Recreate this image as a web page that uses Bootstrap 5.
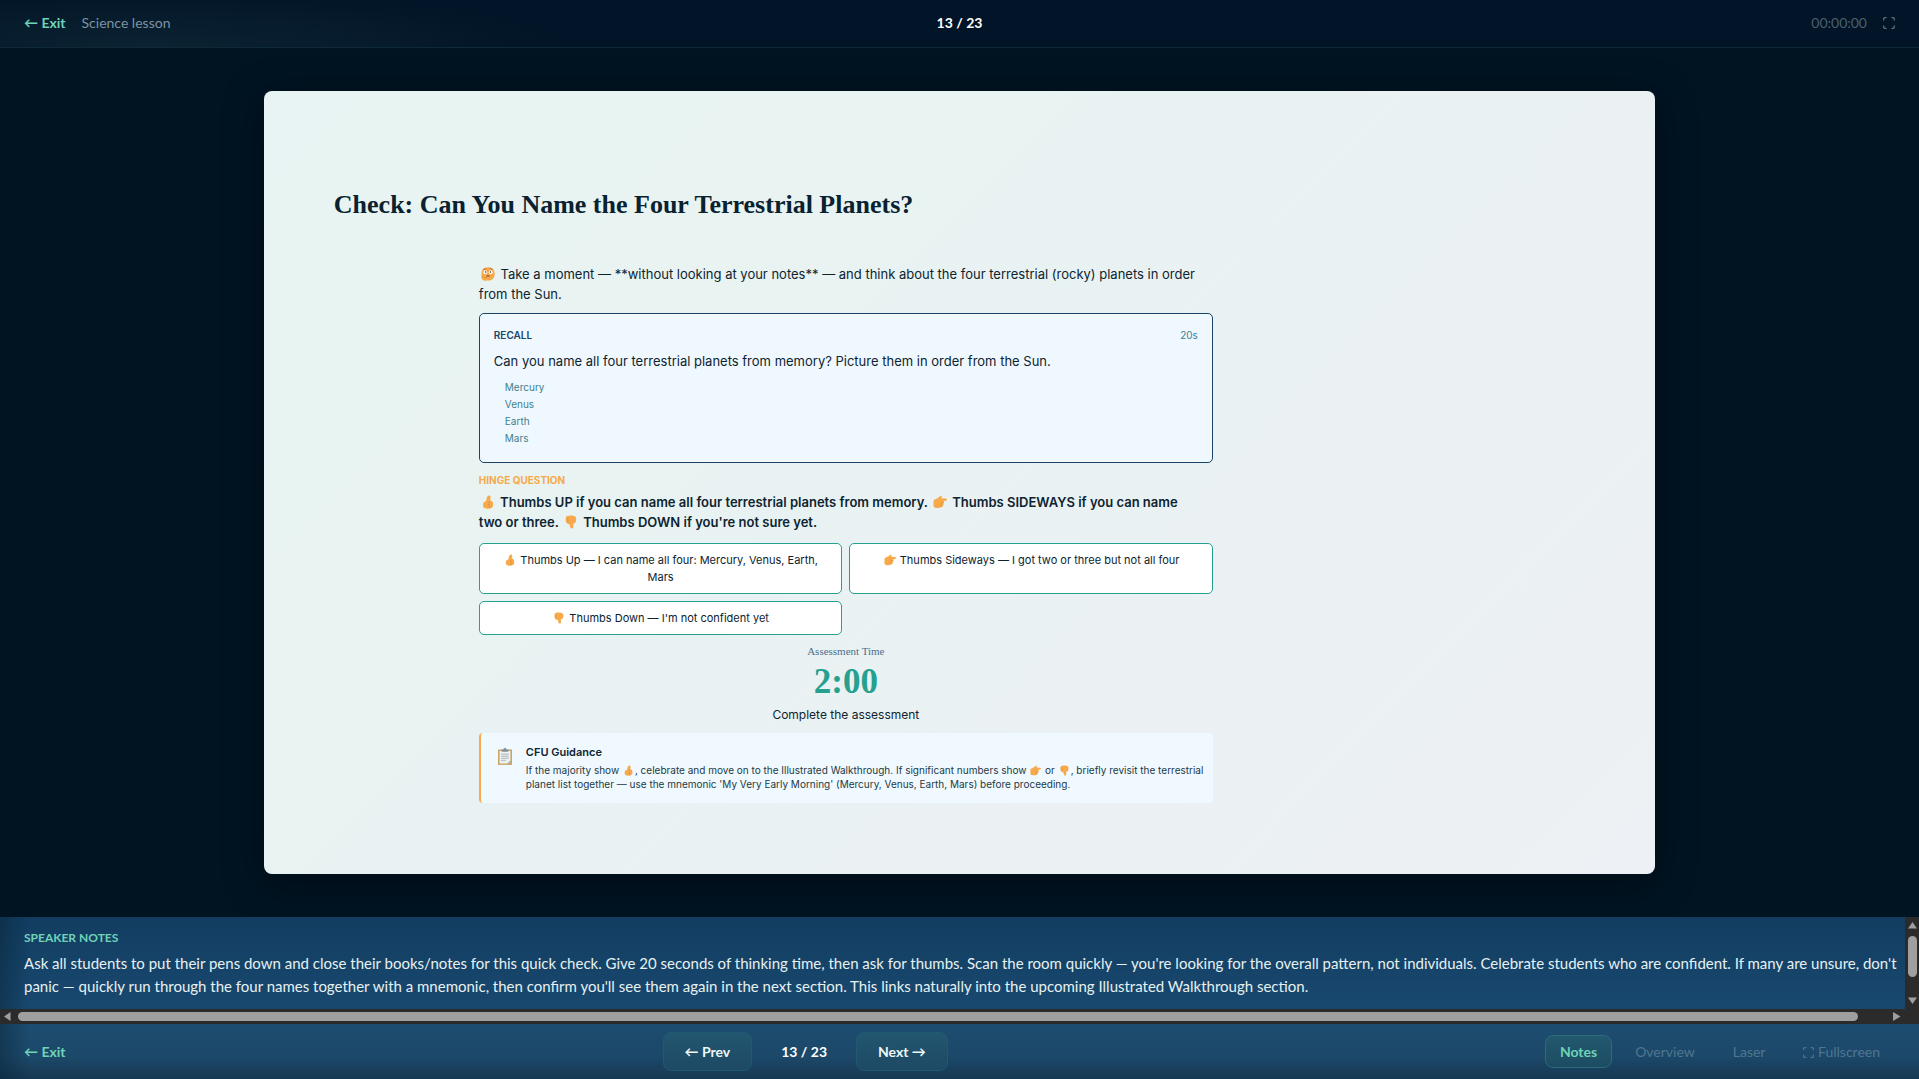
<!DOCTYPE html>
<html lang="en">
<head>
<meta charset="utf-8">
<meta name="viewport" content="width=device-width, initial-scale=1">
<title>Science lesson</title>
<link rel="stylesheet" href="https://cdn.jsdelivr.net/npm/bootstrap@5.3.0/dist/css/bootstrap.min.css">
<style>
  :root { --mint:#6fd3b8; --teal:#26a08f; --navy:#1b4466; --amber:#f7a94b; --ink:#0d2430; }
  body { background:#001422; color:#e6f1f2; font-family:Lato,Inter,sans-serif; font-size:14px; line-height:20px; }
  .topbar { padding:0 24px 2px; height:48px; border-bottom:1px solid #0e2a39;
    background:radial-gradient(ellipse 420px 60px at 150px 48px,#0b2332,rgba(11,35,50,0)) #021427; }
  .side-area { flex:1 1 0; }
  .exit-link { color:var(--mint); font-weight:700; text-decoration:none; }
  .lesson-name { color:#7d93a3; }
  .clock-text { color:#4a6070; }
  .plain-btn { background:none; border:0; padding:0; color:#5b7180; line-height:0; }
  .counter { font-weight:700; color:#fff; }
  .slide-page { height:90%; aspect-ratio:16/9; border-radius:8px; color:var(--ink);
    font-family:Inter,sans-serif; font-size:13px; line-height:20px;
    background:linear-gradient(135deg,#e8f4f3,#e8f3f2 30%,#eaf1f3 60%,#edf0f4); box-shadow:0 8px 40px rgba(0,0,0,.4); }
  .slide-inner { padding:97px 5% 0; }
  .slide-title { font:700 26px/34px "Liberation Serif",serif; margin:0 0 42px; color:#0a2230; }
  .slide-col { max-width:734px; margin-left:145px; }
  .recall { background:#f0f8ff; border:1px solid var(--navy); border-radius:5px; padding:13px 14px; margin-top:9px; }
  .tag-label { font-size:10px; line-height:16px; font-weight:600; color:var(--navy); }
  .tag-amber { color:var(--amber); font-weight:700; margin-top:9px; }
  .tag-time { font-size:10px; line-height:16px; color:#3f7f8f; }
  .planets { font-size:10px; line-height:17px; color:#3f8089; margin:8px 0 2px; padding-left:11px; list-style:none; }
  .hinge { font-weight:600; margin:4px 0 11px; padding-right:20px; }
  .answers { display:grid; grid-template-columns:1fr 1fr; gap:7px; }
  .answer { background:#fff; border:1px solid var(--teal); border-radius:5px; padding:8px 14px 7px; font-size:11px; line-height:17px; text-align:center; }
  .timer-label { font:11px/14px "Liberation Serif",serif; color:#4b6f8c; margin-top:9px; }
  .timer { font:700 35px/40px "Liberation Serif",serif; color:var(--teal); margin-top:4px; }
  .timer-note { font-size:12px; line-height:18px; margin-top:4px; }
  .guide { background:#f0f9ff; border-left:2px solid var(--amber); border-radius:4px; padding:11px 4px 12px 17px; margin-top:9px; gap:14px; }
  .guide-title { font-size:11px; line-height:16px; font-weight:600; }
  .guide-text { font-size:10px; line-height:14px; margin-top:3px; color:#1c3944; }
  .em { width:14px; height:14px; margin:0 2px; vertical-align:-2px; }
  .answer .em { width:12px; height:12px; margin:0 1px; }
  .guide-text .em { width:11px; height:11px; margin:0 1px; }
  .notes { height:107px; background:linear-gradient(90deg,rgba(8,38,58,.5),rgba(8,38,58,0) 30px),linear-gradient(#123d61,#1a4a71); }
  .notes-copy { padding:13px 4px 0 24px; height:92px; overflow:hidden; }
  .notes-label { color:var(--mint); font-weight:700; font-size:12px; line-height:16px; }
  .notes-text { font-size:15px; line-height:23px; margin:6px 0 0; }
  .rail { background:#2b2b2b; color:#9f9f9f; }
  .rail-v { width:14px; padding:5px 0; }
  .rail-h { height:15px; padding:0 18px 0 3px; }
  .thumb { background:#9f9f9f; border-radius:5px; }
  .thumb-v { width:9px; height:41px; margin-top:7px; }
  .thumb-h { height:9px; margin:0 35px 0 7px; }
  .footbar { height:55px; padding:0 24px; background:linear-gradient(90deg,rgba(8,38,58,.5),rgba(8,38,58,0) 30px),linear-gradient(#1d4d71,#1c4869 60%,#163852); }
  .nav-step { height:39px; padding:0 21px; border:1px solid #215873; border-radius:8px; background:linear-gradient(#23566f,#1d4964); color:#eef7f5; font-weight:700; }
  .foot-count { padding:0 29px; }
  .tool { height:33px; padding:0 14px; border:1px solid transparent; border-radius:8px; background:none; color:#4f7690; }
  .tool-on { background:linear-gradient(#23586f,#1c4c62); border-color:#2d6a7c; color:var(--mint); font-weight:700; }
</style>
</head>
<body class="vh-100 d-flex flex-column overflow-hidden">
<svg class="d-none" aria-hidden="true">
  <symbol id="up" viewBox="0 0 14 14"><path fill="#f7a94b" d="M5.200 6C5.600 4.500 5.600 1 8 .6c1.500-.2 2.100 1.600 1.200 4.600 2.200.7 2.900 2 2.900 4.500 0 2.700-1.600 4-4.700 4-3.700 0-5.400-1-5.400-3.800C2 7.500 3.500 6.600 5.200 6z"/><path d="M7.500 7.500h1M7.500 9.500h1M7.500 11.500h1" stroke="#c9812c"/></symbol>
  <symbol id="side" viewBox="0 0 14 14"><path fill="#f7a94b" d="M.5 6.200C1 4.500 3 3.800 4.500 3.300L7.500.8c1-.6 1.700.5 1.100 1.500l-.5 1 5 .2c1.200.3 1.100 2-.1 2.200L10.500 6c1 .7.900 1.700 0 2.300.5.9.1 1.700-.7 2 .3 1-.2 1.800-1.300 2C5.500 13.500.8 13.300.5 11z"/><path d="M7.200 8h3M7 10.300h2.500" stroke="#d98f37" stroke-width=".6"/></symbol>
  <symbol id="down" viewBox="0 0 14 14"><path fill="#f7a94b" d="M1.800 3C2 1.300 3.500.6 7 .6s5.200.9 5.200 3.400c0 2.600-.8 4.300-3.100 4.700.6 2 .4 4.600-.9 4.900-1.500.2-2.300-1.900-2.500-4.200C3.500 9 2 8 1.800 6z"/><path d="M2.500 4h2M2.700 6h2" stroke="#d98f37" stroke-width=".6"/></symbol>
  <symbol id="think" viewBox="0 0 14 14"><path fill="#f7a94b" d="M.6 4.500C1.500 1.500 4 .3 7.200.3c4 0 6.500 2.500 6.500 6.400 0 4.200-2.500 6.900-6.500 6.900-1.800 0-3.200.2-4.500-.2C.6 12.600.2 11 .5 9z"/><circle cx="4.300" cy="5.200" r="1.900" fill="#fff"/><circle cx="9.700" cy="5.200" r="1.900" fill="#fff"/><circle cx="4.700" cy="5" r=".8" fill="#36312e"/><circle cx="9.400" cy="5" r=".8" fill="#36312e"/><path d="M2.500 2.600l2.500-.9M9 1.500l2.500.8" stroke="#6c4524" stroke-width=".6"/><path d="M5.600 9.300q1.400-1.200 2.800 0" fill="none" stroke="#6c3520"/><path d="M1.200 9.500l2.200 1.200 2.800-.2" fill="none" stroke="#d98f37" stroke-width=".8"/></symbol>
  <symbol id="clip" viewBox="0 0 15 18"><path fill="#c9a465" d="M0 1.500h15V18H0z"/><path fill="#eef2f3" d="M1.700 3h11.600v10l-3.200 3.600H1.700z"/><path fill="#b4bec3" d="M13.300 13v3.600h-3.200z"/><path fill="#7f8d98" d="M4 1.400h2Q6 0 7.500 0T9 1.400h2V4H4z"/><path stroke="#a5b0b7" d="M3.300 6.500h8.400M3.300 8.700h8.400M3.300 10.900h8.400M3.300 13.100h5"/></symbol>
  <symbol id="full" viewBox="0 0 12 12"><path fill="none" stroke="currentColor" stroke-width="1.300" d="M.7 3.600V1.700q0-1 1-1h1.900M8.400.7h1.900q1 0 1 1v1.900M11.300 8.400v1.900q0 1-1 1H8.400M3.600 11.300H1.700q-1 0-1-1V8.400"/></symbol>
</svg>

<header class="topbar d-flex align-items-center flex-shrink-0">
  <div class="side-area d-flex gap-3"><a class="exit-link" href="#">← Exit</a><span class="lesson-name">Science lesson</span></div>
  <div class="counter">13 / 23</div>
  <div class="side-area d-flex justify-content-end align-items-center gap-3"><span class="clock-text">00:00:00</span>
    <button class="plain-btn" type="button" aria-label="Fullscreen"><svg width="12" height="12"><use href="#full"/></svg></button></div>
</header>

<main class="flex-grow-1 d-flex align-items-center justify-content-center overflow-hidden">
  <article class="slide-page">
    <div class="slide-inner">
    <h1 class="slide-title">Check: Can You Name the Four Terrestrial Planets?</h1>
    <div class="slide-col">
      <p class="mb-0"><svg class="em"><use href="#think"/></svg> Take a moment — **without looking at your notes** — and think about the four terrestrial (rocky) planets in order from the Sun.</p>
      <section class="recall">
        <div class="d-flex justify-content-between"><span class="tag-label">RECALL</span><span class="tag-time">20s</span></div>
        <p class="mt-2 mb-0">Can you name all four terrestrial planets from memory? Picture them in order from the Sun.</p>
        <ul class="planets"><li>Mercury</li><li>Venus</li><li>Earth</li><li>Mars</li></ul>
      </section>
      <div class="tag-label tag-amber">HINGE QUESTION</div>
      <p class="hinge"><svg class="em"><use href="#up"/></svg> Thumbs UP if you can name all four terrestrial planets from memory. <svg class="em"><use href="#side"/></svg> Thumbs SIDEWAYS if you can name two or three. <svg class="em"><use href="#down"/></svg> Thumbs DOWN if you're not sure yet.</p>
      <div class="answers">
        <div class="answer"><svg class="em"><use href="#up"/></svg> Thumbs Up — I can name all four: Mercury, Venus, Earth, Mars</div>
        <div class="answer"><svg class="em"><use href="#side"/></svg> Thumbs Sideways — I got two or three but not all four</div>
        <div class="answer"><svg class="em"><use href="#down"/></svg> Thumbs Down — I'm not confident yet</div>
      </div>
      <div class="text-center">
        <div class="timer-label">Assessment Time</div>
        <div class="timer">2:00</div>
        <div class="timer-note">Complete the assessment</div>
      </div>
      <aside class="guide d-flex">
        <svg class="flex-shrink-0 mt-1" width="14" height="17"><use href="#clip"/></svg>
        <div>
          <div class="guide-title">CFU Guidance</div>
          <div class="guide-text">If the majority show <svg class="em"><use href="#up"/></svg>, celebrate and move on to the Illustrated Walkthrough. If significant numbers show <svg class="em"><use href="#side"/></svg> or <svg class="em"><use href="#down"/></svg>, briefly revisit the terrestrial planet list together — use the mnemonic 'My Very Early Morning' (Mercury, Venus, Earth, Mars) before proceeding.</div>
        </div>
      </aside>
    </div>
    </div>
  </article>
</main>

<section class="notes flex-shrink-0">
  <div class="d-flex">
    <div class="notes-copy flex-grow-1">
      <div class="notes-label">SPEAKER NOTES</div>
      <p class="notes-text">Ask all students to put their pens down and close their books/notes for this quick check. Give 20 seconds of thinking time, then ask for thumbs. Scan the room quickly — you're looking for the overall pattern, not individuals. Celebrate students who are confident. If many are unsure, don't panic — quickly run through the four names together with a mnemonic, then confirm you'll see them again in the next section. This links naturally into the upcoming Illustrated Walkthrough section.</p>
    </div>
    <div class="rail rail-v d-flex flex-column align-items-center flex-shrink-0">
      <svg width="9" height="7"><path fill="currentColor" d="M4.500 0L9 6.500H0z"/></svg>
      <div class="thumb thumb-v"></div>
      <svg class="mt-auto" width="9" height="7"><path fill="currentColor" d="M4.500 7L9 .5H0z"/></svg>
    </div>
  </div>
  <div class="rail rail-h d-flex align-items-center">
    <svg width="8" height="9"><path fill="currentColor" d="M1 4.500L7.500 0v9z"/></svg>
    <div class="thumb thumb-h flex-grow-1"></div>
    <svg width="8" height="9"><path fill="currentColor" d="M7.500 4.500L0 0v9z"/></svg>
  </div>
</section>

<footer class="footbar d-flex align-items-center justify-content-between flex-shrink-0">
  <a class="exit-link" href="#">← Exit</a>
  <div class="d-flex align-items-center">
    <button class="nav-step" type="button">← Prev</button>
    <span class="counter foot-count">13 / 23</span>
    <button class="nav-step" type="button">Next →</button>
  </div>
  <div class="d-flex gap-2">
    <button class="tool tool-on" type="button">Notes</button>
    <button class="tool" type="button">Overview</button>
    <button class="tool" type="button">Laser</button>
    <button class="tool" type="button"><svg width="11" height="11"><use href="#full"/></svg> Fullscreen</button>
  </div>
</footer>
<script src="https://cdn.jsdelivr.net/npm/bootstrap@5.3.0/dist/js/bootstrap.bundle.min.js"></script>
</body>
</html>
